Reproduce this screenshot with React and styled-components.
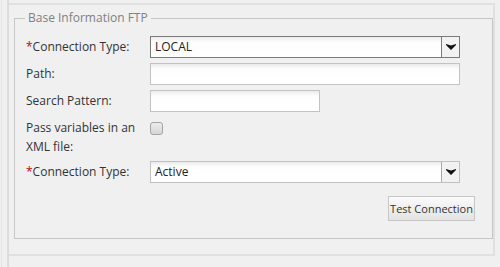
import React from 'react';
import styled, { createGlobalStyle } from 'styled-components';

const GlobalStyle = createGlobalStyle`
    html, body {
        margin: 0;
        padding: 0;
        background: #f0f0f0;
        font-family: "Open Sans", "Liberation Sans", sans-serif;
        font-size: 12px;
        color: #333;
    }
`;

const Frame = styled.div`
    height: 267px;
    margin-left: 1px;
    border-left: 1px solid #e4e4e4;
    padding-left: 5px;
    box-sizing: border-box;
`;

const Column = styled.div`
    height: 100%;
    width: 488px;
    border-left: 2px solid #dcdcdc;
    padding-top: 3px;
    box-sizing: border-box;
`;

const Panel = styled.div`
    height: 253px;
    border-top: 2px solid #e0e0e0;
    border-right: 2px solid #e0e0e0;
    border-bottom: 2px solid #e0e0e0;
    box-sizing: border-box;
    padding-top: 5px;
`;

const FieldSet = styled.fieldset`
    margin: 0 1px 0 5px;
    width: 479px;
    box-sizing: border-box;
    border: 1px solid #c6c6c6;
    padding: 10px 17px 17px 11px;
`;

const Legend = styled.legend`
    margin-left: -1px;
    padding: 0 3px;
    color: #808080;
    font-size: 12px;
    line-height: 16px;
`;

const Form = styled.div`
    display: grid;
    grid-template-columns: 124px 1fr;
    row-gap: 5px;
    align-items: center;
`;

const Label = styled.label`
    line-height: ${(p) => (p.$multi ? '19px' : '16px')};
    align-self: ${(p) => (p.$multi ? 'start' : 'center')};
    padding-top: ${(p) => (p.$multi ? '1px' : '0')};
    color: #333;
`;

const Required = styled.span`
    color: #cc0000;
`;

const TextInput = styled.div`
    width: ${(p) => p.$width}px;
    height: 22px;
    box-sizing: border-box;
    border: 1px solid #c2c2c2;
    background: linear-gradient(#ebebeb, #fdfdfd 5px, #fff);
`;

const Select = styled.div`
    display: flex;
    width: 310px;
    height: 22px;
    box-sizing: border-box;
    border: 1px solid ${(p) => (p.$focused ? '#7a7a7a' : '#c0c0c0')};
    background: linear-gradient(#ebebeb, #fdfdfd 5px, #fff);
`;

const SelectValue = styled.div`
    flex: 1;
    padding-left: 4px;
    line-height: 20px;
    color: #222;
`;

const SelectArrow = styled.div`
    width: 17px;
    display: flex;
    align-items: center;
    justify-content: center;
    background: #f2f2f2;
    border-left: 1px solid ${(p) => (p.$focused ? '#7a7a7a' : '#a8a8a8')};
`;

const CheckCell = styled.div`
    align-self: start;
    padding-top: 5px;
`;

const CheckBox = styled.div`
    width: 13px;
    height: 13px;
    box-sizing: border-box;
    border: 1px solid #a4a4a4;
    border-radius: 3px;
    background: linear-gradient(#ececec, #d6d6d6);
`;

const Actions = styled.div`
    display: flex;
    justify-content: flex-end;
    margin-top: 13px;
`;

const Button = styled.button`
    width: 87px;
    height: 25px;
    padding: 0;
    border: 1px solid #c6c6c6;
    background: linear-gradient(#fbfbfb, #e3e3e3);
    font-family: "Open Sans", "Liberation Sans", sans-serif;
    font-size: 11px;
    color: #333;
`;

const Arrow = () => (
    <svg width="10" height="6" viewBox="0 0 10 6">
        <path d="M0 0 L5 1.5 L10 0 L10 1 L5 6 L0 1 Z" fill="#111" />
    </svg>
);

const Dropdown = ({ value, focused }) => (
    <Select $focused={focused}>
        <SelectValue>{value}</SelectValue>
        <SelectArrow $focused={focused}>
            <Arrow />
        </SelectArrow>
    </Select>
);

const App = () => (
    <>
        <GlobalStyle />
        <Frame>
            <Column>
                <Panel>
                    <FieldSet>
                        <Legend>Base Information FTP</Legend>
                        <Form>
                            <Label><Required>*</Required>Connection Type:</Label>
                            <Dropdown value="LOCAL" focused />

                            <Label>Path:</Label>
                            <TextInput $width={310} />

                            <Label>Search Pattern:</Label>
                            <TextInput $width={170} />

                            <Label $multi>Pass variables in an XML file:</Label>
                            <CheckCell><CheckBox /></CheckCell>

                            <Label><Required>*</Required>Connection Type:</Label>
                            <Dropdown value="Active" />
                        </Form>
                        <Actions>
                            <Button>Test Connection</Button>
                        </Actions>
                    </FieldSet>
                </Panel>
            </Column>
        </Frame>
    </>
);

export default App;
